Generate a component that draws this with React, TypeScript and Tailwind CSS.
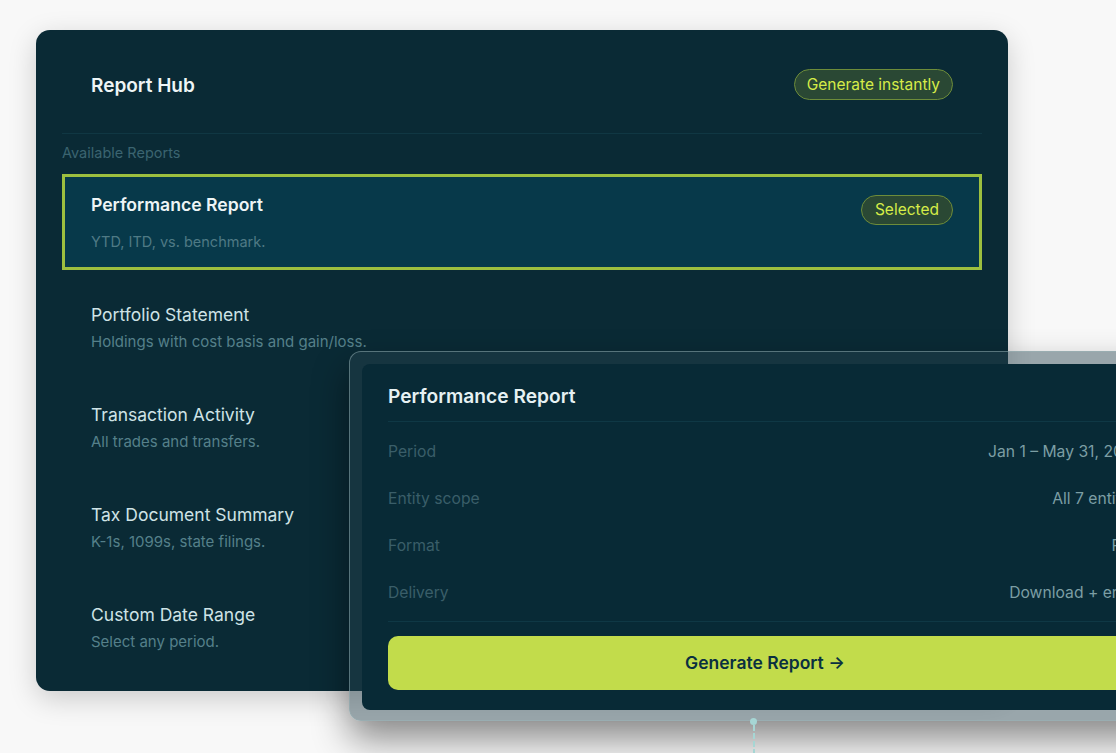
import React from 'react';

interface ReportItem {
  title: string;
  subtitle: string;
}

const reports: ReportItem[] = [
  { title: 'Portfolio Statement', subtitle: 'Holdings with cost basis and gain/loss.' },
  { title: 'Transaction Activity', subtitle: 'All trades and transfers.' },
  { title: 'Tax Document Summary', subtitle: 'K-1s, 1099s, state filings.' },
  { title: 'Custom Date Range', subtitle: 'Select any period.' },
];

const details = [
  { label: 'Period', value: 'Jan 1 – May 31, 2025' },
  { label: 'Entity scope', value: 'All 7 entities' },
  { label: 'Format', value: 'PDF' },
  { label: 'Delivery', value: 'Download + email' },
];

export default function App() {
  return (
    <div
      className="relative w-[1116px] h-[753px] overflow-hidden bg-[#f8f8f8]"
      style={{ fontFamily: 'Inter, "Liberation Sans", sans-serif' }}
    >
      {/* Report hub panel */}
      <div className="ml-[36px] mt-[30px] w-[972px] h-[661px] rounded-[14px] bg-[#0a2a35] shadow-[0_8px_28px_rgba(0,0,0,0.18)]">
        <div className="flex items-center justify-between px-[55px] pt-[39px] pb-[33px]">
          <h1 className="translate-y-[2px] text-[19px] font-semibold text-[#eef5f6]">Report Hub</h1>
          <span className="h-[31px] px-[12px] flex items-center rounded-full border border-[#6d8c3a] bg-[#2a4834] text-[15.5px] text-[#d6ec48]">
            Generate instantly
          </span>
        </div>

        <div className="mx-[26px] h-px bg-[#103743]" />

        <div className="px-[26px]">
          <p className="mt-[9px] text-[14.5px] leading-5 text-[#3b6470]">Available Reports</p>

          {/* Selected report */}
          <div className="mt-[11px] h-[96px] border-[3px] border-[#9dbf3f] bg-[#07394a] pl-[26px] pr-[26px] pt-[16px]">
            <div className="flex items-start justify-between">
              <h2 className="text-[17.6px] leading-6 font-semibold text-[#eef5f6]">Performance Report</h2>
              <span className="mt-[2px] h-[30px] px-[13px] flex items-center rounded-full border border-[#6d8c3a] bg-[#2a4834] text-[15.5px] text-[#d6ec48]">
                Selected
              </span>
            </div>
            <p className="mt-[7px] text-[14.5px] leading-5 text-[#4f7a85]">YTD, ITD, vs. benchmark.</p>
          </div>

          <div className="mt-[7px] flex flex-col">
            {reports.map(r => (
              <div key={r.title} className="h-[100px] px-[29px] pt-[26px]">
                <h3 className="text-[17.5px] leading-6 text-[#cfe3e6]">{r.title}</h3>
                <p className="mt-[5px] text-[15px] leading-5 text-[#55808a]">{r.subtitle}</p>
              </div>
            ))}
          </div>
        </div>
      </div>

      {/* Floating detail card */}
      <div className="absolute left-[349px] top-[351px] w-[832px] rounded-[12px] border border-[#9ab4b8]/50 bg-[#26434d]/45 p-[12px] pb-[10px] shadow-[0_18px_36px_rgba(0,0,0,0.45)]">
        <div className="rounded-[8px] bg-[#082a36] px-[26px] pb-[20px]">
          <div className="pt-[19px] pb-[12px]">
            <h2 className="text-[19.2px] leading-[26px] font-semibold text-[#e6f1f3]">Performance Report</h2>
          </div>
          <div className="h-px bg-[#0f3845]" />

          <div className="pt-[6px]">
            {details.map(d => (
              <div key={d.label} className="h-[47px] flex items-center justify-between text-[15.7px]">
                <span className="text-[#3a5e69]">{d.label}</span>
                <span className="text-[#7c9ea4]">{d.value}</span>
              </div>
            ))}
          </div>

          <div className="mt-[5px] h-px bg-[#0f3845]" />

          <button className="mt-[14px] w-full h-[54px] rounded-[10px] bg-[#c2dc4b] text-[17.5px] font-semibold text-[#0a3040]">
            Generate Report →
          </button>
        </div>
      </div>

      {/* Connector below the card */}
      <div className="absolute left-[750px] top-[718px] flex flex-col items-center">
        <div className="w-[7px] h-[7px] rounded-full bg-[#a6d6d4]" />
        <div className="h-[30px] border-l-2 border-dashed border-[#a6d6d4]" />
      </div>
    </div>
  );
}
